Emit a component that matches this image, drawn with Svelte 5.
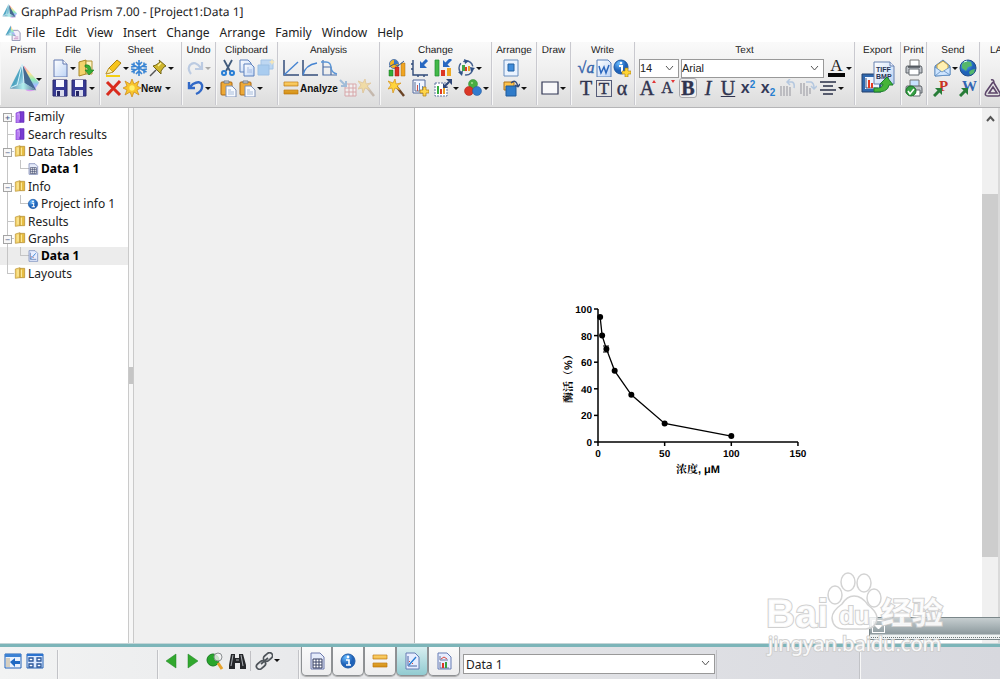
<script>
  let fontSize = "14";
  let fontName = "Arial";
  let sheet = "Data 1";
  let selected = 8;

  const icons = {
    prism: '<path d="M18 4 34 22 29 30Q24 32 20 30Z" fill="url(#rainbow)"/><path d="M16 2 3 28 18 22Z" fill="url(#glass)"/><path d="M16 2 18 22 31 30Z" fill="#456a91"/><path d="M3 28 18 22 31 30Z" fill="url(#glassBase)"/><path d="M16 2 11 24 4 27M16 2 18 22" stroke="#dffaff" fill="none"/>',
    prismPage: '<path d="M16 12h13l5 5v18H16z" fill="#f4f0fa" stroke="#8d8fb0" stroke-width="2"/><path d="M13 1 24 24 14 18Z" fill="url(#rainbow)"/><path d="M13 1 1 23 14 18Z" fill="url(#glass)"/><path d="M1 23 14 18 25 25Z" fill="url(#glassBase)"/><path d="M20 31h10M22 27h8" stroke="#c58abf" stroke-width="2"/>',
    page: '<path d="M3 1h9l4 4v13H3z" fill="url(#paper)" stroke="#6279b0"/><path d="M12 1v4h4" fill="#fff" stroke="#6279b0"/>',
    door: '<path d="M2 3 9 1v14l-7 2z" fill="#f2d36b" stroke="#a98828"/><path d="M9 2h6v13H9z" fill="#fff5c4" stroke="#b19235"/><path d="M8 6q6-1 6 5h3l-5 5-4-5h3q0-3-3-3z" fill="#35ad35" stroke="#187b20" stroke-width=".6"/>',
    save: '<path d="M2 1h14v16H2z" fill="#363994" stroke="#28286d"/><path d="M5 1h8v7H5z" fill="#f7f7ff"/><path d="M5 11h8v6H5z" fill="#d8daec"/><path d="M6 12h3v5H6z" fill="#262764"/>',
    pen: '<path d="M2 15 5 9 13 1l4 3-8 9z" fill="#f7c51d" stroke="#ad8210"/><path d="m2 15 3-6 4 4z" fill="#fff0af" stroke="#ae871e" stroke-width=".6"/><path d="M2 17h14" stroke="#f4cf13" stroke-width="2"/>',
    snow: '<path d="M9 1v16M6 3l3 3 3-3M6 15l3-3 3 3M1.5 5l15 8M1.5 13l15-8M4 3.5v4L1 8M14 3.5v4l3 .5M4 14.5v-4L1 10M14 14.5v-4l3-.5" fill="none" stroke="#3985d4" stroke-width="1.6"/>',
    pin: '<path d="m7 11-6 6" stroke="#555" stroke-width="1.4"/><path d="m4 7 3-1 4-3-1-2 7 6-2 1-3 4v3z" fill="#cfb62d" stroke="#746719"/><path d="m9 7 3-3" stroke="#fff39b" stroke-width="1.5"/>',
    cross: '<path d="M3 3 16 16M16 2 3 16" stroke="#d92b1d" stroke-width="3"/>',
    star: '<path d="m9 0 2 5 5-3-2 5 4 2-4 2 2 5-5-3-2 5-2-5-5 3 2-5-4-2 4-2-2-5 5 3z" fill="#f8c52c" stroke="#cb8512" stroke-width=".7"/><circle cx="9" cy="9" r="2.7" fill="#fff06c"/>',
    redo: '<path d="M5 15Q1 10 4 6q5-5 11 3M16 3v7H9" fill="none" stroke="#bccbe2" stroke-width="2.2"/>',
    undo: '<path d="M3 3v6h6M3 9l4-4q7-4 9 1 1 6-6 9" fill="none" stroke="#3269c7" stroke-width="2.4"/>',
    cut: '<path d="M5 1 11 12M13 1 7 12" stroke="#415b7c" stroke-width="1.8"/><g fill="none" stroke="#287ed5" stroke-width="2"><circle cx="5" cy="14" r="2"/><circle cx="13" cy="14" r="2"/></g>',
    copy: '<path d="M2 1h8l3 3v9H2z" fill="url(#paper)" stroke="#5d80bd"/><path d="M6 5h7l3 3v9H6z" fill="url(#paper)" stroke="#5d80bd"/><path d="M9 9h2m-2 2h5m-5 2h5" stroke="#8ca8d5" stroke-width=".7"/>',
    stack: '<path d="M4 1h12v9H4z" fill="#bed7f2" stroke="#a3c4e5"/><path d="M1 6h11v10H1z" fill="#a9ccef" stroke="#9cbfe3"/><path d="m15 0 1 2 2 1-2 1-1 2-1-2-2-1 2-1z" fill="#f5e6b9"/>',
    paste: '<rect x="2" y="3" width="11" height="13" rx="1" fill="#eea936" stroke="#a86613"/><path d="M5 4V2h5v2z" fill="#d7dce3" stroke="#747c87"/><path d="M7 7h6l4 4v7H7z" fill="#f7faff" stroke="#7d90b6"/><path d="M9 11h3m-3 2h6m-6 2h6" stroke="#93abd0" stroke-width=".8"/>',
    line: '<path d="M2 1v15h15" fill="none" stroke="#344e7b" stroke-width="1.5"/><path d="M2 16 16 3" stroke="#4684d1" stroke-width="1.4"/>',
    curve: '<path d="M2 1v15h15" fill="none" stroke="#344e7b" stroke-width="1.5"/><path d="M2 16Q4 6 16 4" fill="none" stroke="#4684d1" stroke-width="1.4"/>',
    decay: '<path d="M3 1v15h14M3 8h8v8" fill="none" stroke="#4a6da5" stroke-width="1.2"/><path d="M1 3h5q5 0 5 6 1 5 6 6" fill="none" stroke="#5b96d7" stroke-width="1.3"/>',
    equals: '<path d="M2 3h14v4H2zM2 11h14v4H2z" fill="url(#gold)" stroke="#bd7a11" stroke-width=".7"/>',
    grid: '<g opacity=".4"><path d="M6 5h11v12H6z" fill="#fff" stroke="#c74d52"/><path d="M6 9h11M6 13h11M10 5v12M14 5v12" stroke="#c74d52"/><path d="m1 1 5 5M7 2v5H2" stroke="#397cc1" stroke-width="2" fill="none"/></g>',
    fadedWand: '<g opacity=".35"><path d="m8 7 8 10" stroke="#8d6a4a" stroke-width="2.5"/><path d="m7 0 1 5 5-1-4 3 3 4-5-2-2 5-1-5-4 1 3-4-3-4 5 2z" fill="#ffc52e" stroke="#d69322"/></g>',
    bars: '<circle cx="6" cy="5" r="4.5" fill="#f3b422" stroke="#537bb5"/><path d="M6 5V1a4 4 0 0 1 4 4z" fill="#3976c8"/><path d="M1 11h4v6H1z" fill="#32ad37" stroke="#187323" stroke-width=".5"/><path d="M7 8h4v9H7z" fill="#d83122" stroke="#a11c14" stroke-width=".5"/><path d="M13 4h4v13h-4z" fill="#f0a523" stroke="#a76d16" stroke-width=".5"/><path d="m1 8 5-3 4 2 6-5" stroke="#365b91" fill="none"/>',
    axes: '<path d="M2 1v15h15M2 5H0M2 10H0M7 16v2M13 16v2" fill="none" stroke="#314b79" stroke-width="1.4"/><path d="M16 1 11 6" stroke="#2868c2" stroke-width="3"/><path d="M9 2v7h7z" fill="#2868c2"/>',
    barArrow: '<path d="M1 1h4v16H1z" fill="#43b849" stroke="#1c8d2e" stroke-width=".7"/><path d="M7 11h4v6H7z" fill="#dc3726"/><path d="M13 9h4v8h-4z" fill="#edaa25"/><path d="m17 0-5 5" stroke="#2868c2" stroke-width="3"/><path d="M9 1v7h7z" fill="#2868c2"/>',
    cycle: '<circle cx="9" cy="9" r="7" fill="none" stroke="#435f8e" stroke-width="1.4" stroke-dasharray="12 3"/><path d="m7 0 5 2-4 3zM18 9l-4 4-1-5zM1 13l5-1-1 5z" fill="#315387"/><path d="M5 6h3v6H5z" fill="#45a847"/><path d="M8 8h2v4H8z" fill="#db3926"/><path d="M11 7h2v5h-2z" fill="#eca325"/>',
    wand: '<path d="m8 7 8 10" stroke="#6a4325" stroke-width="2.4"/><path d="m7 0 1 5 5-1-4 3 3 4-5-2-2 5-1-5-4 1 3-4-3-4 5 2z" fill="#ffd43c" stroke="#d69015" stroke-width=".7"/>',
    addGraph: '<path d="M2 1h12v13H2z" fill="#f1f5ff" stroke="#546b9d"/><path d="M4 3v9h8" fill="none" stroke="#5f7094"/><path d="M6 6h1v6H6z" fill="#cb5549"/><path d="M8 4h1v8H8zM11 7h1v5h-1z" fill="#5b8acc"/><path d="M12 8h3v3h3v3h-3v3h-3v-3H9v-3h3z" fill="#ffd64b" stroke="#ad7a13" stroke-width=".7"/>',
    resize: '<path d="M1 4h12v13H1z" fill="#fff" stroke="#6074a0" stroke-dasharray="2 1"/><path d="M3 7h2v8H3z" fill="#36ad40"/><path d="M6 10h2v5H6z" fill="#de3a25"/><path d="M9 9h2v6H9z" fill="#e8a027"/><path d="m11 7 4-4" stroke="#304878" stroke-width="2"/><path d="M12 0h6v6zM9 4v5h5z" fill="#304878"/>',
    balls: '<circle cx="9" cy="5" r="4.5" fill="#48ae42" stroke="#338735" stroke-width=".5"/><circle cx="5" cy="12" r="4.5" fill="#db3726" stroke="#a42318" stroke-width=".5"/><circle cx="13" cy="12" r="4.5" fill="#327bce" stroke="#245698" stroke-width=".5"/><circle cx="8" cy="4" r="1" fill="#a9df94"/>',
    square: '<path d="M2 1h14v16H2z" fill="#eaf3ff" stroke="#6b8fbe"/><path d="M6 5h6v7H6z" fill="#3f8cdb" stroke="#25619e"/>',
    rotate: '<path d="M2 3h10v8H2z" fill="#ffc34c" stroke="#ac731a"/><path d="M4 7h10v10H4z" fill="#2f7bc9" stroke="#205a99"/><path d="M9 4q5-5 7 4m0 0-3-2m3 2 2-3" fill="none" stroke="#344c79" stroke-width="1.4"/>',
    rectangle: '<path d="M1 3h16v12H1z" fill="#f8f8fa" stroke="#313654" stroke-width="1.2"/>',
    wordPage: '<path d="M2 1h11l3 3v14H2z" fill="url(#paper)" stroke="#577fb9"/><path d="m4 7 2 7 3-6 2 6 3-8" fill="none" stroke="#2a66bd" stroke-width="1.5"/>',
    infoAdd: '<circle cx="8" cy="8" r="7" fill="url(#blueBall)" stroke="#1a58a4"/><circle cx="8" cy="4" r="1.3" fill="#fff"/><path d="M6 7h3v6" fill="none" stroke="#fff" stroke-width="2"/><path d="M12 9h3v3h3v3h-3v3h-3v-3H9v-3h3z" fill="#ffd535" stroke="#a67910" stroke-width=".6"/>',
    turnLeft: '<path d="M2 7v10M5 7v10M8 7v10M11 8v9" stroke="#b8b8bd" stroke-width="1.8"/><path d="M8 3h5q3 1 2 6M11 0 8 3l3 3" fill="none" stroke="#b5c8df" stroke-width="1.5"/>',
    turnRight: '<path d="M2 4v11M5 4v13M8 7v10M11 9v6" stroke="#b8b8bd" stroke-width="1.8"/><path d="M7 3h5q3 1 3 6m-3-2 3 3 3-3" fill="none" stroke="#b5c8df" stroke-width="1.5"/>',
    align: '<path d="M1 3h16M4 7h10M1 11h16M4 15h10" stroke="#292f47" stroke-width="1.5"/>',
    export: '<path d="M1 13h19v18H1z" fill="#2e67ad" stroke="#25416c"/><path d="M4 16h14v12H4z" fill="#eef4ff"/><path d="M5 17v10h12" fill="none" stroke="#3b5178"/><path d="M7 19h2v8H7zM10 22h2v5h-2z" fill="#e33a22"/><path d="M13 1h16l4 4v18H13z" fill="url(#paper)" stroke="#6781b0"/><path d="M29 1v4h4" fill="#e6ecfc" stroke="#6781b0"/><text x="15" y="11" class="tiny">TIFF</text><text x="15" y="18" class="tiny">BMP</text><path d="M13 27q9 1 9-4h-3l7-7 6 8h-4q-1 8-15 7z" fill="#45b438" stroke="#1b812a"/>',
    printer: '<path d="M5 1h9v7H5z" fill="#fff" stroke="#777"/><path d="M2 7h14q1 1 1 3v4H1V9q0-2 1-2z" fill="#bfc3c9" stroke="#5d6269"/><path d="M4 10h10v6H4z" fill="#fff" stroke="#656a70"/><path d="M3 8h12" stroke="#30343b" stroke-width="1.2"/>',
    printCheck: '<path d="M5 1h9v7H5z" fill="#c8e2ff" stroke="#777"/><path d="M2 7h14q1 1 1 3v4H1V9q0-2 1-2z" fill="#bfc3c9" stroke="#5d6269"/><path d="M8 11h7v6H8z" fill="#fff" stroke="#656a70"/><circle cx="6" cy="12" r="5" fill="#35a044" stroke="#187526"/><path d="m3 12 2 3 4-5" fill="none" stroke="#fff" stroke-width="1.6"/>',
    mail: '<path d="m2 7 8-6 7 6v9L2 17z" fill="#8bb6e6" stroke="#5484bb"/><path d="M4 6 10 2l5 4v6l-6 3-5-4z" fill="#fff0b2" stroke="#c29c42"/><path d="m2 8 7 5 8-5v8L2 17zM2 17l6-5m9 4-6-4" fill="#cee5ff" stroke="#5a8abf" stroke-width=".8"/>',
    globe: '<circle cx="9" cy="9" r="8" fill="url(#blueBall)" stroke="#244e88"/><path d="m6 2 6 1 1 4-4 1-2 4-4-3V5zM12 11l4-1-1 4-4 2-1-3z" fill="#55b86b"/><path d="m5 3 3-1" stroke="#d9ffff"/>',
    sendP: '<text x="6" y="12" class="office red">P</text><path d="m1 17 5-5" stroke="#287d38" stroke-width="3"/><path d="M2 9h7v7z" fill="#287d38"/>',
    sendW: '<text x="3" y="12" class="office blue">W</text><path d="m1 17 5-5" stroke="#287d38" stroke-width="3"/><path d="M2 9h7v7z" fill="#287d38"/>',
    labArchives: '<path d="M7 1q3-1 3 3l6 10q1 3-2 3H4q-4 0-2-4L9 3M5 14l4-6 4 6z" fill="none" stroke="#5d466a" stroke-width="1.6"/>',
    folder: '<path d="M2 3 9 1v15l-7 1z" fill="#f3d36d" stroke="#b89133"/><path d="M9 2h7v14H9z" fill="#e7bd43" stroke="#ad8528"/><path d="M11 4v11M6 4v10" stroke="#fff0aa" stroke-width="1.5"/>',
    purple: '<path d="M3 3 9 1v16l-6 1z" fill="#b77bf3" stroke="#7b39cf"/><path d="M9 1h6v16H9z" fill="#783bd1" stroke="#622bb5"/><path d="m5 5 3-1v9" stroke="#e4c5ff" fill="none"/>',
    table: '<path d="M3 1h9l4 4v12H3z" fill="#e5ebfa" stroke="#6c79ac"/><path d="M5 7h9v9H5z" fill="#fff" stroke="#30395c"/><path d="M8 7v9M11 7v9M5 10h9M5 13h9" stroke="#3a4569"/>',
    info: '<circle cx="9" cy="9" r="7" fill="url(#blueBall)" stroke="#1e5ba9"/><circle cx="9" cy="5" r="1.4" fill="#fff"/><path d="M7 8h3v5M7 13h5" fill="none" stroke="#fff" stroke-width="1.6"/>',
    graph: '<path d="M3 1h9l4 4v12H3z" fill="#e7edff" stroke="#667db4"/><path d="M5 4v10h9" fill="none" stroke="#4365a3"/><path d="m6 13 7-8" stroke="#287bd0" stroke-width="1.3"/><path d="M6 9h1v1H6zM9 11h1v1H9z" fill="#d94b3b"/>',
    layout: '<path d="M3 1h9l4 4v12H3z" fill="#e7edff" stroke="#667db4"/><path d="M5 4v4h8M5 10v6h9" fill="none" stroke="#6b789f"/><path d="m6 7 3-2 3 2" stroke="#db493f" fill="none"/><path d="M7 11h2v5H7z" fill="#dc3426"/><path d="M10 10h2v6h-2z" fill="#38a23e"/>',
    panel: '<path d="M1 2h16v14H1z" fill="#eaf2fd" stroke="#2563b5"/><path d="M1 2h16v3H1z" fill="#3c82d4"/><path d="M2 6h4v9H2z" fill="#d5cfc1"/><path d="m6 10 5-4v3h5v3h-5v3z" fill="#206ac3"/>',
    gallery: '<path d="M1 2h16v14H1z" fill="#dceaff" stroke="#2563b5"/><path d="M1 2h16v2H1z" fill="#2b73cf"/><path d="M3 6h4v3H3zM11 6h4v3h-4zM3 12h4v3H3zM11 12h4v3h-4z" fill="#fff" stroke="#28569a" stroke-width="1.3"/>',
    previous: '<path d="M14 2v14L4 9z" fill="#31a82e" stroke="#208226" stroke-width=".5"/>',
    next: '<path d="M4 2v14l10-7z" fill="#31a82e" stroke="#208226" stroke-width=".5"/>',
    search: '<circle cx="7" cy="8" r="6" fill="#28a62c" stroke="#177b20"/><circle cx="12" cy="5" r="4" fill="#f4f4f4" fill-opacity=".8" stroke="#8b8f92"/><path d="m12 11 4 6" stroke="#e6a22c" stroke-width="3"/>',
    binoculars: '<path d="M3 2h4v4h4V2h4l3 11v4h-6v-6H7v6H1v-4z" fill="#26282b"/><path d="M5 3 3 14M13 3l2 11M8 8h3" stroke="#a5a9ae" stroke-width="1.1"/>',
    link: '<g fill="none" stroke="#4e545a" stroke-width="1.7"><rect x="8" y="2" width="10" height="6" rx="3" transform="rotate(-40 13 5)"/><rect x="1" y="10" width="10" height="6" rx="3" transform="rotate(-40 6 13)"/><path d="m6 12 7-6"/></g>',
  };

  const groups = [
    { name: "File", rows: [
      [{ icon: "page", arrow: true }, { icon: "door" }],
      [{ icon: "save" }, { icon: "save", label: "save as", arrow: true }],
    ] },
    { name: "Sheet", rows: [
      [{ icon: "pen", arrow: true }, { icon: "snow" }, { icon: "pin", arrow: true }],
      [{ icon: "cross", label: "delete" }, { icon: "star", text: "New", kind: "named", arrow: true }],
    ] },
    { name: "Undo", rows: [
      [{ icon: "redo", arrow: true, off: true }],
      [{ icon: "undo", arrow: true }],
    ] },
    { name: "Clipboard", rows: [
      [{ icon: "cut" }, { icon: "copy" }, { icon: "stack", off: true }],
      [{ icon: "paste" }, { icon: "paste", label: "paste special", arrow: true }],
    ] },
    { name: "Analysis", rows: [
      [{ icon: "line" }, { icon: "curve" }, { icon: "decay" }],
      [{ icon: "equals", text: "Analyze", kind: "named" }, { icon: "grid", off: true }, { icon: "fadedWand", off: true }],
    ] },
    { name: "Change", rows: [
      [{ icon: "bars" }, { icon: "axes" }, { icon: "barArrow" }, { icon: "cycle", arrow: true }],
      [{ icon: "wand" }, { icon: "addGraph" }, { icon: "resize", arrow: true }, { icon: "balls", arrow: true }],
    ] },
    { name: "Arrange", rows: [[{ icon: "square" }], [{ icon: "rotate", arrow: true }]] },
    { name: "Draw", rows: [[], [{ icon: "rectangle", arrow: true }]] },
    { name: "Write", rows: [
      [{ text: "√a", kind: "root" }, { icon: "wordPage" }, { icon: "infoAdd" }],
      [{ text: "T", kind: "serif" }, { text: "T", kind: "serif boxed" }, { text: "α", kind: "serif" }],
    ] },
    { name: "Text", rows: [
      [],
      [
        { text: "A", kind: "serif grow" }, { text: "A", kind: "serif shrink" },
        { text: "B", kind: "serif bold" }, { text: "I", kind: "serif italic" },
        { text: "U", kind: "serif underline" }, { text: "x", sup: "2", kind: "script" },
        { text: "x", sub: "2", kind: "script" }, { icon: "turnLeft", off: true },
        { icon: "turnRight", off: true }, { icon: "align", arrow: true },
      ],
    ] },
    { name: "Export", large: "export" },
    { name: "Print", rows: [[{ icon: "printer" }], [{ icon: "printCheck" }]] },
    { name: "Send", rows: [
      [{ icon: "mail", arrow: true }, { icon: "globe" }],
      [{ icon: "sendP", kind: "wide" }, { icon: "sendW" }],
    ] },
    { name: "LA", rows: [[], [{ icon: "labArchives" }]] },
  ];

  const menus = ["File", "Edit", "View", "Insert", "Change", "Arrange", "Family", "Window", "Help"];

  const tree = [
    { name: "Family", icon: "purple", box: "+" },
    { name: "Search results", icon: "purple" },
    { name: "Data Tables", icon: "folder", box: "−" },
    { name: "Data 1", icon: "table", child: true, bold: true },
    { name: "Info", icon: "folder", box: "−" },
    { name: "Project info 1", icon: "info", child: true },
    { name: "Results", icon: "folder" },
    { name: "Graphs", icon: "folder", box: "−" },
    { name: "Data 1", icon: "graph", child: true, bold: true },
    { name: "Layouts", icon: "folder" },
  ];

  const tabs = ["table", "info", "equals", "graph", "layout"];

  const points = [[1.6, 94], [3.1, 80], [6.3, 70], [12.5, 53.5], [25, 35.5], [50, 14], [100, 4.5]];
  const px = x => 38 + x * 1.333;
  const py = y => 143 - y * 1.33;
  const path = points.map(([x, y]) => `${px(x)},${py(y)}`).join(" ");
</script>

<style>
  :global(body) {
    margin: 0;
  }

  .app {
    position: relative;
    display: flex;
    flex-direction: column;
    min-height: 100vh;
    overflow: hidden;
    background: #fff;
    color: #222;
    font-family: "Noto Sans", "Open Sans", sans-serif;
    font-size: 12px;
    text-rendering: geometricPrecision;
  }

  .defs {
    position: absolute;
    width: 0;
    height: 0;
  }

  button,
  select {
    font: inherit;
    color: inherit;
    margin: 0;
    padding: 0;
    border: 0;
    background: none;
  }

  svg {
    display: block;
    flex: none;
  }

  .title {
    display: flex;
    align-items: center;
    gap: 3px;
    height: 23px;
    padding-left: 1px;
  }

  .title h1 {
    margin: 0;
    font-size: 12px;
    font-weight: 400;
  }

  .menu {
    display: flex;
    align-items: center;
    gap: 10px;
    height: 19px;
    padding-left: 5px;
  }

  .menu svg {
    margin-right: -5px;
  }

  .ribbon {
    display: flex;
    height: 65px;
    border-bottom: 1px solid #b5b5b7;
    background: linear-gradient(#fafafa, #ececec 55%, #dcdcdc);
    font-family: "Liberation Sans", Arial, sans-serif;
  }

  .group {
    flex: none;
    box-sizing: border-box;
    border-left: 1px solid #c9c9cf;
    box-shadow: inset 1px 0 #f7f7f7;
    height: 63px;
  }

  .group h2 {
    margin: 0;
    padding-top: 1px;
    font-size: 10px;
    font-weight: 400;
    line-height: 15px;
    text-align: center;
  }

  .prism {
    width: 46px;
    border: 0;
  }

  .prism button {
    display: flex;
    align-items: center;
    padding: 4px 0 0 7px;
  }

  .prism .arrow {
    margin-left: -5px;
  }

  .file { width: 53px; }
  .sheet { width: 82px; }
  .undo { width: 34px; }
  .clipboard { width: 62px; }
  .analysis { width: 102px; }
  .change { width: 112px; }
  .arrange { width: 45px; }
  .draw { width: 34px; }
  .write { width: 64px; }
  .text { width: 220px; }
  .export { width: 46px; }
  .print { width: 26px; }
  .send { width: 53px; }

  .la {
    flex: 1;
    min-width: 0;
    overflow: hidden;
  }

  .la h2 {
    padding-left: 10px;
    text-align: left;
  }

  .row {
    display: flex;
    align-items: center;
    gap: 1px;
    height: 20px;
    padding-left: 4px;
  }

  .clipboard .row { padding-left: 3px; }
  .change .row { padding-left: 8px; gap: 5px; }
  .arrange .row { padding-left: 10px; }
  .write .row { padding-left: 6px; gap: 0; }
  .text .row { gap: 2px; }
  .send .row { padding-left: 6px; }

  .tool {
    display: flex;
    align-items: center;
    flex: none;
    height: 20px;
    min-width: 18px;
    justify-content: center;
    white-space: nowrap;
  }

  .tool.wide {
    padding-right: 7px;
  }

  .arrow {
    width: 0;
    margin-left: 1px;
    border: 3px solid transparent;
    border-top-color: #111;
    border-bottom: 0;
  }

  .off .arrow {
    border-top-color: #aaa;
  }

  .named {
    font-size: 10px;
    font-weight: 700;
    color: #111;
  }

  .named .arrow {
    margin-left: 3px;
  }

  .serif,
  .root {
    font-family: "Liberation Serif", serif;
    font-size: 20px;
    line-height: 18px;
    color: #30344f;
    -webkit-text-stroke: 0.4px #30344f;
  }

  .root {
    font-size: 16px;
    font-style: italic;
    color: #3565ac;
    -webkit-text-stroke: 0.4px #3565ac;
  }

  .boxed {
    box-sizing: border-box;
    height: 17px;
    min-width: 16px;
    margin: 0 1px;
    border: 1px solid #555b78;
    font-size: 17px;
    line-height: 15px;
  }

  .grow::after,
  .shrink::after {
    content: "";
    align-self: flex-start;
    margin: 2px 0 0 -2px;
    border: 2px solid transparent;
    border-top: 0;
    border-bottom: 3px solid #e23536;
  }

  .shrink {
    font-size: 16px;
  }

  .shrink::after {
    border-top: 3px solid #e23536;
    border-bottom: 0;
  }

  .bold {
    box-sizing: border-box;
    border: 1px solid #a7a7ab;
    border-radius: 3px;
    background: #efefef;
    font-weight: 700;
  }

  .italic { font-style: italic; }
  .underline { text-decoration: underline; text-decoration-thickness: 1px; }

  .script {
    font-size: 16px;
    font-weight: 700;
    color: #343a58;
  }

  .script sup,
  .script sub {
    font-size: 10px;
    line-height: 10px;
    color: #267ed0;
  }

  .script sup { align-self: flex-start; padding-top: 2px; }
  .script sub { align-self: flex-end; }

  .pick {
    position: relative;
    box-sizing: border-box;
    height: 19px;
    border: 1px solid #999;
    background: #fff;
  }

  .pick select {
    width: 100%;
    height: 100%;
    padding-left: 2px;
    appearance: none;
    outline: 0;
  }

  .pick svg {
    position: absolute;
    right: 4px;
    top: 5px;
    pointer-events: none;
  }

  .pick.size,
  .pick.face {
    font-size: 11px;
  }

  .pick.size { width: 40px; }
  .pick.face { width: 143px; }

  .pick.size select,
  .pick.face select {
    padding-left: 0;
  }

  .ink {
    display: flex;
    align-items: center;
    padding-left: 2px;
  }

  .ink span {
    width: 17px;
    border-bottom: 4px solid #050505;
    font-family: "Liberation Serif", serif;
    font-size: 17px;
    line-height: 14px;
  }

  .export button {
    padding: 3px 0 0 6px;
  }

  svg :global(.tiny) {
    font: 700 7px "Liberation Sans", sans-serif;
    fill: #293454;
  }

  svg :global(.office) {
    font: 700 15px "Liberation Serif", serif;
  }

  svg :global(.red) { fill: #c93421; }
  svg :global(.blue) { fill: #3266b3; }

  main {
    display: flex;
    flex: 1;
    background: #f0f0f0;
  }

  .sidebar {
    flex: none;
    width: 128px;
    background: #fff;
  }

  .tree {
    display: grid;
    grid-auto-rows: 1fr;
    height: 174px;
    margin: 0;
    padding: 0;
    list-style: none;
  }

  .tree li {
    display: flex;
    position: relative;
    min-height: 0;
  }

  .tree li::before {
    content: "";
    position: absolute;
    left: 7px;
    top: 0;
    bottom: 0;
    border-left: 1px solid #c5c5c5;
  }

  .tree li:first-child::before {
    top: 50%;
  }

  .tree li:last-child::before {
    bottom: 50%;
  }

  .tree button {
    display: flex;
    align-items: center;
    gap: 2px;
    width: 100%;
    color: #222;
  }

  .tree .selected {
    background: #ececec;
  }

  .tree .strong {
    font-weight: 700;
    color: #000;
  }

  .twig {
    width: 7px;
    border-top: 1px solid #c5c5c5;
    margin: 0 -2px 0 7px;
  }

  .nested .twig {
    box-sizing: border-box;
    width: 10px;
    height: 9px;
    margin: -8px -5px 0 20px;
    border: solid #c5c5c5;
    border-width: 0 0 1px 1px;
  }

  .box {
    position: absolute;
    left: 3px;
    top: 5px;
    box-sizing: border-box;
    width: 9px;
    height: 9px;
    border: 1px solid #a4a4a4;
    background: #f8f8f8;
    color: #415786;
    font-size: 9px;
    line-height: 7px;
    text-align: center;
  }

  .splitter {
    display: flex;
    align-items: center;
    width: 4px;
    border: solid #cacaca;
    border-width: 0 1px;
    background: #f7f7f7;
  }

  .splitter span {
    width: 4px;
    height: 17px;
    background: #c5c5c5;
  }

  .desk {
    display: flex;
    flex: 1;
    padding-left: 280px;
  }

  .paper {
    flex: 1;
    padding: 191px 0 0 145px;
    border-left: 1px solid #b8b8b8;
    background: #fff;
  }

  .chart {
    overflow: visible;
    font: 700 10px "Liberation Sans", "Noto Sans CJK SC", sans-serif;
  }

  .chart .axis-name {
    font: 700 11px "Liberation Sans", "Noto Serif CJK SC", "Noto Sans CJK SC", sans-serif;
  }

  .scroll {
    display: flex;
    flex-direction: column;
    width: 16px;
    border-right: 2px solid #dadada;
    background: #f0f0f0;
  }

  .scroll button {
    display: flex;
    justify-content: center;
    height: 86px;
    padding-top: 7px;
  }

  .thumb {
    flex: 0 1 363px;
    background: #cdcdcd;
  }

  .bottom {
    display: flex;
    box-sizing: border-box;
    height: 36px;
    border-top: 1px solid #c4d5d7;
    background: linear-gradient(90deg, #f2f3f3, #e4e5e8 45%, #d7d8de);
    box-shadow: inset 0 3px #7cb5b9;
  }

  .section {
    display: flex;
    align-items: center;
    box-sizing: border-box;
    height: 29px;
    margin-top: 6px;
    border-right: 1px solid #c2c3c7;
    box-shadow: 1px 0 #f7f7f7;
    padding-bottom: 8px;
    flex: none;
  }

  .views { width: 58px; gap: 4px; padding-left: 4px; }
  .blank { width: 100px; }
  .moves { width: 141px; gap: 4px; padding-left: 4px; }

  .moves .divider {
    width: 1px;
    height: 20px;
    background: #c0c0c4;
  }

  .tabs {
    display: flex;
    padding: 3px 3px 0 2px;
    flex: none;
  }

  .tab {
    display: flex;
    align-items: center;
    justify-content: center;
    box-sizing: border-box;
    width: 31px;
    height: 29px;
    border: 1px solid #8d9093;
    border-top: 0;
    border-radius: 0 0 5px 5px;
    background: linear-gradient(#fafafa, #ededee);
    box-shadow: 0 1px 1px #aaa;
  }

  .tab + .tab {
    width: 32px;
  }

  .tab.current {
    background: linear-gradient(#d7eef0, #91cbd1);
  }

  .pick.sheet-name {
    width: 252px;
    height: 20px;
    margin-top: 10px;
    flex: none;
  }

  .tail {
    width: 144px;
    margin-left: 1px;
    border-left: 1px solid #c2c3c7;
  }

  .float {
    position: absolute;
    right: 0;
    bottom: 39px;
    box-sizing: border-box;
    width: 131px;
    height: 23px;
    border: 1px solid #7b878a;
    border-right: 0;
    background: linear-gradient(#c6ced0, #8d9a9e 16px, #eef2f2 17px, #eef2f2);
  }

  .float button {
    box-sizing: border-box;
    width: 13px;
    height: 13px;
    margin: 2px;
    border: 1px solid #fff;
  }

  .float span {
    display: block;
    margin: 3px 1px;
    border: 4px solid transparent;
    border-top-color: #fff;
    border-bottom: 0;
  }

  .float::after {
    content: "";
    position: absolute;
    left: 1px;
    right: 0;
    bottom: 1px;
    border-bottom: 1px dotted #6f797b;
  }

  .watermark {
    position: absolute;
    right: 52px;
    bottom: 20px;
    pointer-events: none;
  }

  .watermark text {
    fill: #fff;
    fill-opacity: 0.9;
    stroke: #d0d0d0;
    stroke-width: 2px;
    paint-order: stroke;
    font-family: "Noto Sans", sans-serif;
  }

  .watermark .logo {
    font: 700 40px "Liberation Sans", sans-serif;
  }

  .watermark .du {
    font: 700 25px "Liberation Sans", sans-serif;
  }

  .watermark .cjk {
    font: 700 31px "Noto Sans CJK SC", sans-serif;
  }
</style>

{#snippet icon(name, size = 18, box = 18)}
  <svg width={size} height={size} viewBox="0 0 {box} {box}" aria-hidden="true">
    {@html icons[name]}
  </svg>
{/snippet}

{#snippet chevron()}
  <svg width="9" height="7" viewBox="0 0 9 7" aria-hidden="true"><path d="m1 1 3.5 4L8 1" fill="none" stroke="#555" /></svg>
{/snippet}

<div class="app">
  <svg class="defs" aria-hidden="true">
    <defs>
      <linearGradient id="glass" x2="1" y2="1"><stop stop-color="#a8e7ef" /><stop offset=".55" stop-color="#4ba1bf" /><stop offset="1" stop-color="#d4f8ff" /></linearGradient>
      <linearGradient id="glassBase"><stop stop-color="#5384ad" /><stop offset=".5" stop-color="#b2f0ee" /><stop offset="1" stop-color="#577393" /></linearGradient>
      <linearGradient id="rainbow" x2="0" y2="1"><stop stop-color="#fb87ae" /><stop offset=".3" stop-color="#ffe394" /><stop offset=".55" stop-color="#90eeb6" /><stop offset=".75" stop-color="#9ebdff" /><stop offset="1" stop-color="#e197ef" /></linearGradient>
      <linearGradient id="paper" x2="1" y2="1"><stop stop-color="#fff" /><stop offset="1" stop-color="#bcd3f5" /></linearGradient>
      <linearGradient id="gold" x2="0" y2="1"><stop stop-color="#ffd36a" /><stop offset="1" stop-color="#d38e12" /></linearGradient>
      <radialGradient id="blueBall" cx=".35" cy=".25"><stop stop-color="#65baff" /><stop offset="1" stop-color="#1f62b8" /></radialGradient>
    </defs>
  </svg>

  <header class="title">
    {@render icon("prism", 17, 36)}
    <h1>GraphPad Prism 7.00 - [Project1:Data 1]</h1>
  </header>

  <nav class="menu">
    {@render icon("prismPage", 16, 36)}
    {#each menus as name}
      <button>{name}</button>
    {/each}
  </nav>

  <div class="ribbon">
    <section class="group prism">
      <h2>Prism</h2>
      <button aria-label="Prism menu">{@render icon("prism", 34, 36)}<span class="arrow"></span></button>
    </section>
    {#each groups as group}
      <section class="group {group.name.toLowerCase()}">
        <h2>{group.name}</h2>
        {#if group.large}
          <button aria-label={group.name}>{@render icon(group.large, 36, 36)}</button>
        {:else}
          {#each group.rows as row, i}
            <div class="row">
              {#if group.name === "Text" && i === 0}
                <div class="pick size">
                  <select aria-label="Font size" bind:value={fontSize}><option>14</option></select>
                  {@render chevron()}
                </div>
                <div class="pick face">
                  <select aria-label="Font" bind:value={fontName}><option>Arial</option></select>
                  {@render chevron()}
                </div>
                <button class="ink" aria-label="Text color"><span>A</span><i class="arrow"></i></button>
              {/if}
              {#each row as tool}
                <button class="tool {tool.kind || ''} {tool.off ? 'off' : ''}" aria-label={tool.text || tool.label || tool.icon}>
                  {#if tool.icon}{@render icon(tool.icon)}{/if}
                  {#if tool.text}{tool.text}{/if}
                  {#if tool.sup}<sup>{tool.sup}</sup>{/if}
                  {#if tool.sub}<sub>{tool.sub}</sub>{/if}
                  {#if tool.arrow}<span class="arrow"></span>{/if}
                </button>
              {/each}
            </div>
          {/each}
        {/if}
      </section>
    {/each}
  </div>

  <main>
    <aside class="sidebar">
      <ul class="tree">
        {#each tree as item, i}
          <li class:nested={item.child} class:selected={selected === i}>
            <button class:strong={item.bold} on:click={() => (selected = i)}>
              <span class="twig"></span>
              {@render icon(item.icon, 12)}
              {item.name}
            </button>
            {#if item.box}<span class="box">{item.box}</span>{/if}
          </li>
        {/each}
      </ul>
    </aside>
    <div class="splitter"><span></span></div>
    <div class="desk">
      <div class="paper">
        <svg class="chart" width="250" height="180" role="img" aria-label="酶活 (%) / 浓度, μM">
          <path d="M38 10V143H238" fill="none" stroke="#000" stroke-width="1.5" />
          {#each [0, 20, 40, 60, 80, 100] as tick}
            <path d="M34 {py(tick)}H38" stroke="#000" stroke-width="1.5" />
            <text x="32" y={py(tick) + 4} text-anchor="end">{tick}</text>
          {/each}
          {#each [0, 50, 100, 150] as tick}
            <path d="M{px(tick)} 143v4" stroke="#000" stroke-width="1.5" />
            <text x={px(tick)} y="158" text-anchor="middle">{tick}</text>
          {/each}
          <polyline points={path} fill="none" stroke="#000" stroke-width="1.3" />
          {#each points as [x, y]}
            <circle cx={px(x)} cy={py(y)} r="3" />
          {/each}
          <path d="M43 47h6M43 53h6M46 47v6" stroke="#000" stroke-width="1.2" />
          <text class="axis-name" x="138" y="174" text-anchor="middle">浓度, μM</text>
          <text class="axis-name" transform="translate(12 77) rotate(-90)" text-anchor="middle">酶活（%）</text>
        </svg>
      </div>
      <div class="scroll">
        <button aria-label="Scroll up"><svg width="9" height="7" viewBox="0 0 9 7"><path d="m1 6 3.5-4L8 6" fill="none" stroke="#555" stroke-width="2" /></svg></button>
        <div class="thumb"></div>
      </div>
    </div>
  </main>

  <footer class="bottom">
    <div class="section views">
      <button aria-label="Navigator">{@render icon("panel")}</button>
      <button aria-label="Gallery">{@render icon("gallery")}</button>
    </div>
    <div class="section blank"></div>
    <div class="section moves">
      <button aria-label="Previous sheet">{@render icon("previous")}</button>
      <button aria-label="Next sheet">{@render icon("next")}</button>
      <button aria-label="Search">{@render icon("search")}</button>
      <button aria-label="Find">{@render icon("binoculars")}</button>
      <span class="divider"></span>
      <button class="tool" aria-label="Linked sheets">{@render icon("link")}<span class="arrow"></span></button>
    </div>
    <div class="tabs">
      {#each tabs as tab}
        <button class="tab" class:current={tab === "graph"} aria-label={tab}>{@render icon(tab)}</button>
      {/each}
    </div>
    <div class="pick sheet-name">
      <select aria-label="Sheet" bind:value={sheet}><option>Data 1</option></select>
      {@render chevron()}
    </div>
    <div class="section tail"></div>
  </footer>

  <div class="float"><button aria-label="Window menu"><span></span></button></div>

  <svg class="watermark" width="184" height="90" viewBox="0 0 184 90" role="img" aria-label="Baidu">
    <g fill="#fff" fill-opacity=".8" stroke="#d3d3d3" stroke-width="1.5">
      <ellipse cx="71" cy="26" rx="7" ry="9" />
      <ellipse cx="84" cy="13" rx="7" ry="9" />
      <ellipse cx="100" cy="14" rx="7" ry="9" />
      <ellipse cx="110" cy="29" rx="7" ry="9" />
      <path d="M90 27q-7 0-12 8-10 7-10 14 1 11 12 11h22q11-1 11-12-1-6-9-12-6-9-14-9z" />
    </g>
    <text class="logo" x="2" y="58">Bai</text>
    <text class="du" x="75" y="55">du</text>
    <text class="cjk" x="117" y="55">经验</text>
    <text x="4" y="82" font-size="20">jingyan.baidu.com</text>
  </svg>
</div>
